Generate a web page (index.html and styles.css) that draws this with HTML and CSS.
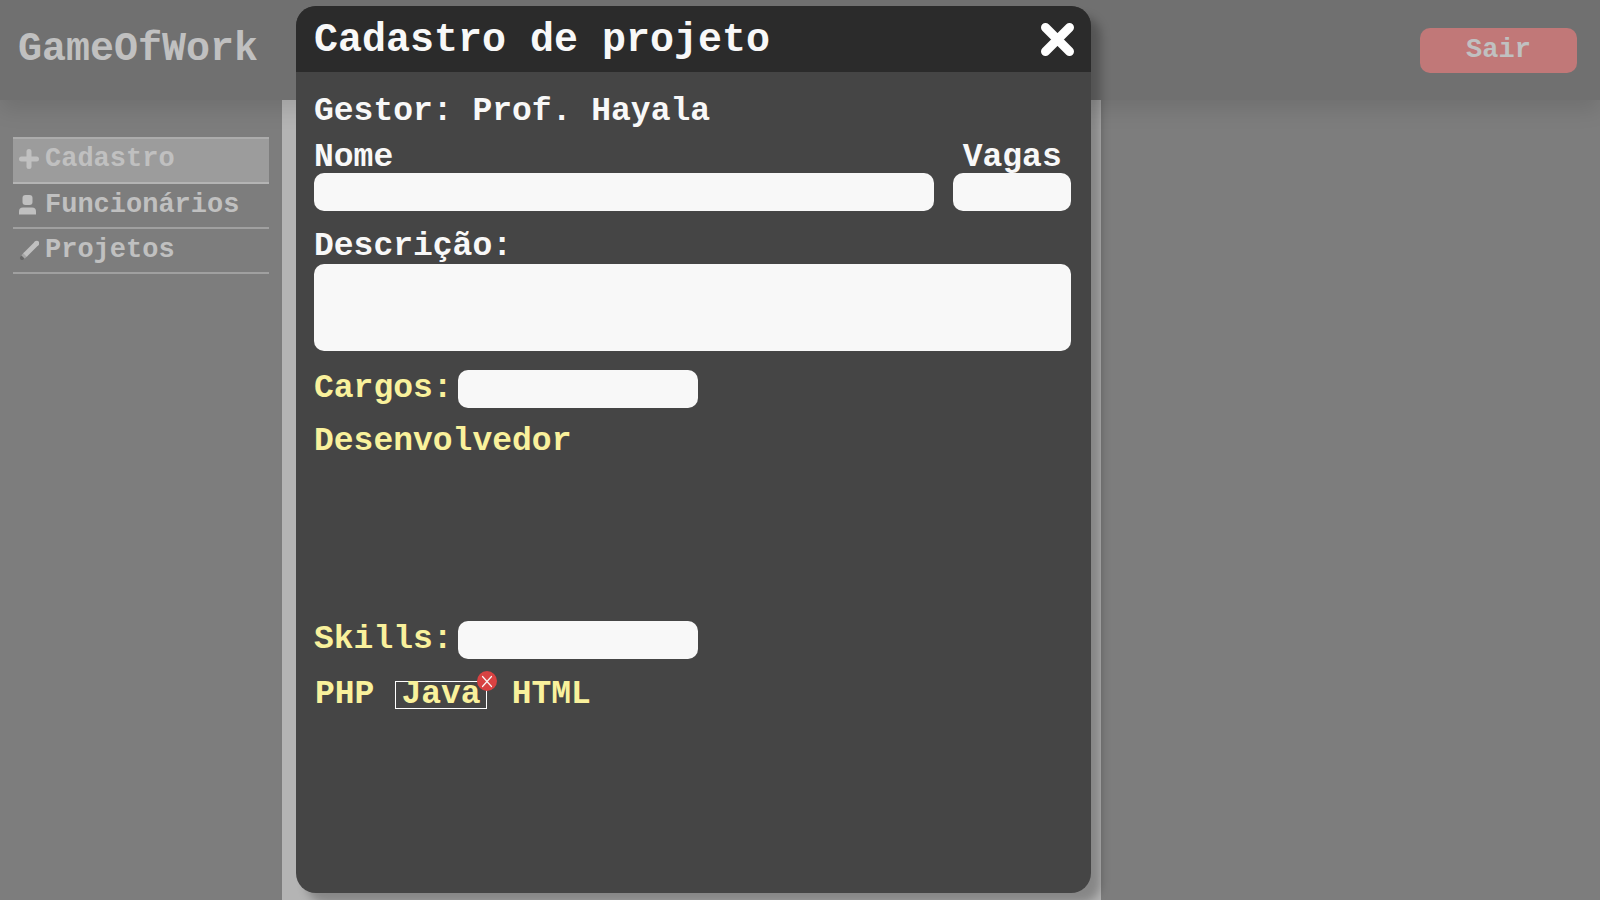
FILE: index.html
```html
<!DOCTYPE html>
<html lang="pt-BR">
<head>
<meta charset="utf-8">
<title>GameOfWork</title>
<link rel="stylesheet" href="styles.css">
</head>
<body>
<div class="page">
  <header class="topbar">
    <span class="brand">GameOfWork</span>
    <button class="logout" type="button">Sair</button>
  </header>
  <div class="columns">
    <nav class="sidebar">
      <a class="nav-item active" href="#cadastro">
        <svg class="nav-icon" viewBox="0 0 20 20"><path d="M10 2.500v15M2.500 10h15" stroke="currentColor" stroke-width="5" stroke-linecap="round"/></svg>Cadastro</a>
      <a class="nav-item" href="#funcionarios">
        <svg class="nav-icon" viewBox="0 0 20 20"><rect x="3.500" y="0" width="10" height="10" rx="3" fill="currentColor"/><path d="M0 19.500v-3q0-4 4-4h9q4 0 4 4v3z" fill="currentColor"/></svg>Funcionários</a>
      <a class="nav-item" href="#projetos">
        <svg class="nav-icon" viewBox="0 0 20 20"><path d="M3 18l2-2" stroke="#676767" stroke-width="4" stroke-linecap="round"/><path d="M4 17l3-3" stroke="#a6a6a6" stroke-width="5"/><path d="M6 15L18 3" stroke="currentColor" stroke-width="5"/><circle cx="17.700" cy="3.300" r="2.500" fill="currentColor"/></svg>Projetos</a>
    </nav>
    <main class="content"></main>
  </div>
</div>

<section class="modal" role="dialog" aria-labelledby="modal-title">
  <header class="modal-head">
    <h1 class="modal-title" id="modal-title">Cadastro de projeto</h1>
    <button class="close" type="button" aria-label="Fechar">
      <svg viewBox="0 0 33 33" width="33" height="33"><path d="M4.500 4.500l24 24M28.500 4.500l-24 24" stroke="#fff" stroke-width="9" stroke-linecap="round"/></svg>
    </button>
  </header>
  <form class="modal-body">
    <p class="manager">Gestor: Prof. Hayala</p>
    <div class="row">
      <div class="field grow">
        <label for="nome">Nome</label>
        <input class="control" id="nome" type="text">
      </div>
      <div class="field slots">
        <label for="vagas">Vagas</label>
        <input class="control" id="vagas" type="text">
      </div>
    </div>
    <div class="field description">
      <label for="descricao">Descrição:</label>
      <textarea class="control area" id="descricao"></textarea>
    </div>
    <div class="picker">
      <label for="cargos">Cargos:</label>
      <input class="control short" id="cargos" type="text">
    </div>
    <div class="roles">Desenvolvedor</div>
    <div class="picker">
      <label for="skills">Skills:</label>
      <input class="control short" id="skills" type="text">
    </div>
    <div class="tags">
      <span class="tag">PHP</span>
      <span class="tag selected">Java<button class="remove" type="button" aria-label="Remover Java"><svg viewBox="0 0 20 20" width="20" height="20"><circle cx="10" cy="10" r="10" fill="#d84242"/><path d="M5.500 5.500l9 10M14.500 5.500l-9 10" stroke="#f8f8f8" stroke-width="1.200" stroke-linecap="round"/></svg></button></span>
      <span class="tag">HTML</span>
    </div>
  </form>
</section>
</body>
</html>
```

FILE: styles.css
```css
* {
  box-sizing: border-box;
}

body {
  margin: 0;
  background: #7d7d7d;
  color: #c0c0c0;
  font-family: "Liberation Mono", "Courier New", monospace;
  font-weight: 700;
}

button,
input,
textarea {
  font: inherit;
  border: 0;
  padding: 0;
}

.page {
  display: flex;
  flex-direction: column;
  min-height: 100vh;
}

.topbar {
  position: relative;
  display: flex;
  align-items: center;
  justify-content: space-between;
  height: 100px;
  padding: 0 23px 0 18px;
  background: #707070;
  box-shadow: 0 10px 20px rgba(0, 0, 0, 0.1);
}

.brand {
  font-size: 40px;
  line-height: 44px;
}

.logout {
  width: 157px;
  height: 45px;
  border-radius: 10px;
  background: #c17878;
  color: #c0c0c0;
  font-size: 27px;
}

.columns {
  flex: 1;
  display: grid;
  grid-template-columns: 282fr 819fr 499fr;
}

.sidebar {
  padding: 37px 13px;
}

.nav-item {
  display: flex;
  align-items: center;
  gap: 6px;
  height: 45px;
  padding: 0 0 2px 6px;
  border-bottom: 2px solid #a0a0a0;
  color: inherit;
  font-size: 27px;
  text-decoration: none;
}

.nav-item.active {
  height: 47px;
  padding-bottom: 4px;
  border-top: 2px solid #acacac;
  border-bottom-color: #b4b4b4;
  background: #9c9c9c;
}

.nav-icon {
  width: 20px;
  height: 20px;
}

.content {
  background: #b4b4b4;
}

.modal {
  position: absolute;
  top: 6px;
  bottom: 7px;
  left: 18.5%;
  width: 49.7%;
  border-radius: 20px;
  background: #454545;
  color: #f8f8f8;
  box-shadow: 10px 10px 10px rgba(0, 0, 0, 0.25);
}

.modal-head {
  display: flex;
  align-items: center;
  justify-content: space-between;
  height: 66px;
  padding: 0 17px 0 18px;
  border-radius: 20px 20px 0 0;
  background: #2b2b2b;
}

.modal-title {
  margin: 0;
  padding-top: 4px;
  font-size: 40px;
  line-height: 44px;
}

.close {
  display: flex;
  background: none;
}

.modal-body {
  padding: 26px 20px 0 18px;
  font-size: 33px;
  line-height: 28px;
}

.manager {
  margin: 0 0 18px;
}

.row {
  display: flex;
  gap: 19px;
}

.field {
  display: flex;
  flex-direction: column;
  gap: 1px;
}

.grow {
  flex: 1;
}

.slots {
  width: 118px;
  text-align: center;
}

.description {
  gap: 3px;
  margin: 22px 0 19px;
}

.control {
  width: 100%;
  height: 38px;
  padding: 0 10px;
  border-radius: 10px;
  background: #f8f8f8;
  color: #2b2b2b;
  font-size: 27px;
}

.area {
  height: 87px;
  padding: 8px 10px;
  resize: none;
}

.picker {
  display: flex;
  align-items: center;
  gap: 5px;
  color: #f9f19c;
}

.short {
  width: 240px;
}

.roles {
  height: 170px;
  margin: 20px 0 23px;
  color: #f9f19c;
}

.tags {
  display: flex;
  gap: 19px;
  margin-top: 22px;
  color: #f9f19c;
}

.tag {
  position: relative;
  height: 28px;
  padding: 0 5px;
  border: 1px solid transparent;
  line-height: 26px;
}

.tag:first-child {
  padding: 0 1px 0 0;
}

.tag.selected {
  border-color: #fff;
}

.remove {
  position: absolute;
  top: -11px;
  right: -11px;
  display: flex;
  background: none;
}
```
